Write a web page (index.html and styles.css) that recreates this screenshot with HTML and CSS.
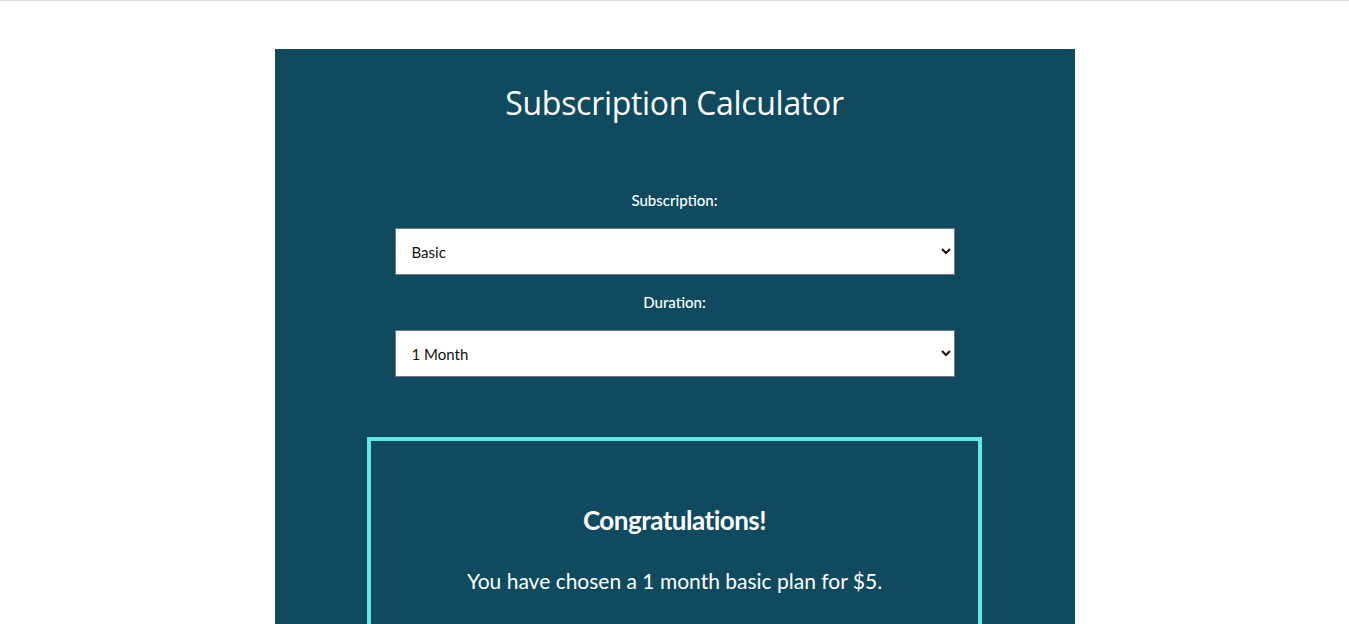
FILE: index.html
```html
<!DOCTYPE html>
<html lang="en">
<head>
<meta charset="utf-8">
<title>Subscription Calculator</title>
<link rel="stylesheet" href="styles.css">
</head>
<body>
<main class="calculator">
  <h1 class="title">Subscription Calculator</h1>
  <form class="form">
    <label class="label" for="sub">Subscription:</label>
    <select class="select" id="sub">
      <option>Basic</option>
      <option>Premium</option>
    </select>
    <label class="label" for="dur">Duration:</label>
    <select class="select" id="dur">
      <option>1 Month</option>
      <option>3 Months</option>
      <option>6 Months</option>
      <option>12 Months</option>
    </select>
  </form>
  <section class="result">
    <h2 class="result-title">Congratulations!</h2>
    <p class="result-text">You have chosen a 1 month basic plan for $5.</p>
  </section>
</main>
</body>
</html>
```
FILE: styles.css
```css
html, body {
  margin: 0;
  padding: 0;
  background: #ffffff;
}
body {
  border-top: 1px solid #dddddd;
  font-family: Lato, "Noto Sans", sans-serif;
}
.calculator {
  width: 800px;
  margin: 48px auto 0;
  background: #0f4a5f;
  color: #ffffff;
  padding: 34px 0 60px;
  box-sizing: border-box;
  min-height: 700px;
}
.title {
  margin: 0;
  text-align: center;
  font-family: "Open Sans", Lato, sans-serif;
  font-weight: 400;
  font-size: 32px;
  line-height: 40px;
  letter-spacing: -0.3px;
}
.form {
  display: flex;
  flex-direction: column;
  align-items: center;
  margin-top: 67px;
}
.label {
  font-size: 15px;
  line-height: 20px;
  font-weight: 500;
  margin-bottom: 18px;
}
.select {
  width: 560px;
  height: 47px;
  border: 1px solid #777;
  border-radius: 0;
  background: #fff;
  color: #111;
  font-family: Lato, "Noto Sans", sans-serif;
  font-size: 15px;
  padding: 0 10px 0 12px;
  margin-bottom: 17px;
}
.result {
  width: 615px;
  box-sizing: border-box;
  margin: 43px auto 0;
  border: 4px solid #5ceae1;
  padding: 62px 20px 40px;
  text-align: center;
}
.result-title {
  margin: 0;
  font-size: 26px;
  line-height: 34px;
  font-weight: 700;
  letter-spacing: -0.5px;
}
.result-text {
  margin: 30px 0 0;
  font-size: 21px;
  line-height: 28px;
}
```
